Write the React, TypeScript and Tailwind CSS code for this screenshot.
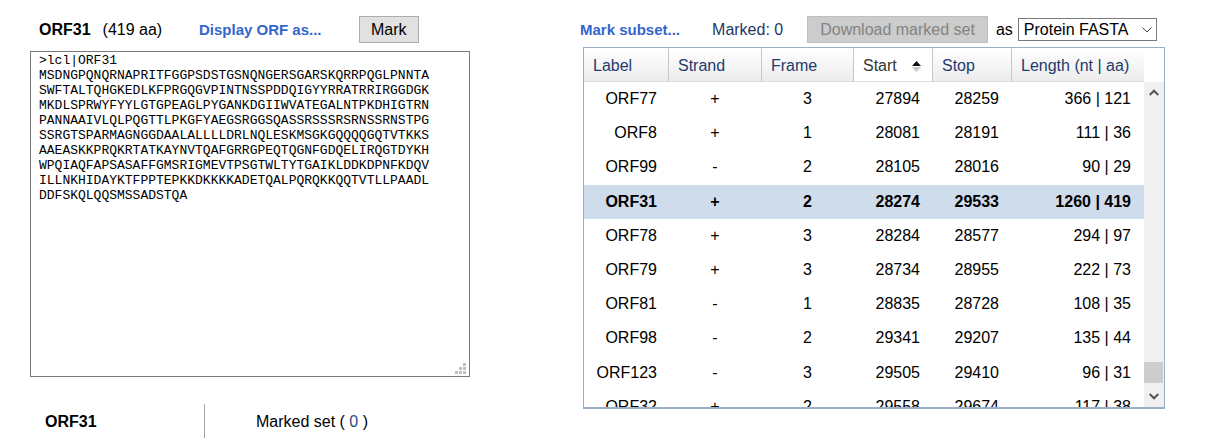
import { useState } from "react";

type Orf = {
  label: string;
  strand: "+" | "-";
  frame: number;
  start: number;
  stop: number;
  length: string;
};

const ORFS: Orf[] = [
  { label: "ORF77", strand: "+", frame: 3, start: 27894, stop: 28259, length: "366 | 121" },
  { label: "ORF8", strand: "+", frame: 1, start: 28081, stop: 28191, length: "111 | 36" },
  { label: "ORF99", strand: "-", frame: 2, start: 28105, stop: 28016, length: "90 | 29" },
  { label: "ORF31", strand: "+", frame: 2, start: 28274, stop: 29533, length: "1260 | 419" },
  { label: "ORF78", strand: "+", frame: 3, start: 28284, stop: 28577, length: "294 | 97" },
  { label: "ORF79", strand: "+", frame: 3, start: 28734, stop: 28955, length: "222 | 73" },
  { label: "ORF81", strand: "-", frame: 1, start: 28835, stop: 28728, length: "108 | 35" },
  { label: "ORF98", strand: "-", frame: 2, start: 29341, stop: 29207, length: "135 | 44" },
  { label: "ORF123", strand: "-", frame: 3, start: 29505, stop: 29410, length: "96 | 31" },
  { label: "ORF32", strand: "+", frame: 2, start: 29558, stop: 29674, length: "117 | 38" },
];

const SEQUENCE = `>lcl|ORF31
MSDNGPQNQRNAPRITFGGPSDSTGSNQNGERSGARSKQRRPQGLPNNTA
SWFTALTQHGKEDLKFPRGQGVPINTNSSPDDQIGYYRRATRRIRGGDGK
MKDLSPRWYFYYLGTGPEAGLPYGANKDGIIWVATEGALNTPKDHIGTRN
PANNAAIVLQLPQGTTLPKGFYAEGSRGGSQASSRSSSRSRNSSRNSTPG
SSRGTSPARMAGNGGDAALALLLLDRLNQLESKMSGKGQQQQGQTVTKKS
AAEASKKPRQKRTATKAYNVTQAFGRRGPEQTQGNFGDQELIRQGTDYKH
WPQIAQFAPSASAFFGMSRIGMEVTPSGTWLTYTGAIKLDDKDPNFKDQV
ILLNKHIDAYKTFPPTEPKKDKKKKADETQALPQRQKKQQTVTLLPAADL
DDFSKQLQQSMSSADSTQA`;

function ResizeGrip() {
  return (
    <svg
      className="pointer-events-none absolute right-1 bottom-[3px]"
      width="11"
      height="11"
      fill="#bfbfbf"
      shapeRendering="crispEdges"
      aria-hidden="true"
    >
      <path d="M8 0h3v3H8zM4 4h3v3H4zM8 4h3v3H8zM0 8h3v3H0zM4 8h3v3H4zM8 8h3v3H8z" />
    </svg>
  );
}

function SortIcon() {
  return (
    <svg width="9" height="11" viewBox="0 0 9 11" aria-hidden="true">
      <path d="M0 5L4.5 0L9 5z" fill="#111" />
      <path d="M0 6L4.5 11L9 6z" fill="#c8c8c8" />
    </svg>
  );
}

function SequencePanel() {
  return (
    <section>
      <div className="flex h-[51px] items-end pb-2 pl-[9px]">
        <h2 className="flex w-40 shrink-0 gap-3 leading-[27px]">
          <span className="font-bold">ORF31</span>
          <span>(419 aa)</span>
        </h2>
        <a href="#display" className="w-40 shrink-0 text-[15px] leading-[27px] font-bold text-[#3366cc]">
          Display ORF as...
        </a>
        <button type="button" className="h-[27px] border border-[#adadad] bg-[#e1e1e1] px-[11px] leading-6">
          Mark
        </button>
      </div>
      <div className="relative">
        <textarea
          aria-label="Protein sequence"
          readOnly
          spellCheck={false}
          defaultValue={SEQUENCE}
          className="block h-[326px] w-full resize-none overflow-hidden border border-[#7a7a7a] bg-white px-2 pt-px font-['Liberation_Mono',monospace] text-[13px] leading-[15px]"
        />
        <ResizeGrip />
      </div>
      <div className="mt-[27px] flex h-[34px] leading-9">
        <button type="button" className="w-[175px] border-r border-[#a6a6a6] pl-[15px] text-left font-bold">
          ORF31
        </button>
        <button type="button" className="pl-[51px] text-left">
          Marked set ( <span className="text-[#2c4a80]">0</span> )
        </button>
      </div>
    </section>
  );
}

function Toolbar() {
  return (
    <div className="flex h-[47px] items-end pb-1 leading-[27px] whitespace-nowrap">
      <a href="#subset" className="text-[15px] font-bold text-[#3366cc]">
        Mark subset...
      </a>
      <span className="ml-8 text-[#1f3864]">Marked: 0</span>
      <button
        type="button"
        disabled
        className="ml-6 h-[27px] border border-[#bfbfbf] bg-[#cccccc] px-3 leading-6 text-[#838383]"
      >
        Download marked set
      </button>
      <label htmlFor="format" className="ml-2">
        as
      </label>
      <div className="relative mb-0.5 ml-[5px] h-[23px] w-[139px]">
        <select
          id="format"
          className="block h-full w-full appearance-none border border-[#7a7a7a] bg-white pl-[5px] leading-5"
        >
          <option>Protein FASTA</option>
          <option>Nucleotide FASTA</option>
        </select>
        <svg
          className="pointer-events-none absolute top-[9px] right-[5px]"
          width="10"
          height="6"
          viewBox="0 0 10 6"
          fill="none"
          stroke="#444"
          aria-hidden="true"
        >
          <path d="M0.5 0.5L5 5L9.5 0.5" />
        </svg>
      </div>
    </div>
  );
}

const HEAD = "border-r border-b border-r-[#c6c6c6] border-b-[#d5dde6] bg-linear-to-b from-white to-[#ececec] pt-[3px] pl-[9px] text-left font-normal";

function OrfTable() {
  const [selected, setSelected] = useState("ORF31");
  return (
    <div className="ml-[3px] flex h-[362px] overflow-hidden border border-b-2 border-[#9ab0c9]">
      <div className="min-w-0 grow overflow-hidden">
        <table className="h-[376px] w-full table-fixed border-separate border-spacing-0 whitespace-nowrap">
          <colgroup>
            <col className="w-[85px]" />
            <col className="w-[93px]" />
            <col className="w-[92px]" />
            <col className="w-[79px]" />
            <col className="w-[79px]" />
            <col className="w-[132px]" />
          </colgroup>
          <thead>
            <tr className="h-[34px] text-[#1f3a6e]">
              <th className={HEAD}>Label</th>
              <th className={HEAD}>Strand</th>
              <th className={HEAD}>Frame</th>
              <th
                aria-sort="ascending"
                className="border-r border-b border-r-[#c6c6c6] border-b-[#d5dde6] pt-[3px] pr-[11px] pl-[9px] text-left font-normal text-[#333]"
              >
                <span className="flex items-center justify-between">
                  Start
                  <SortIcon />
                </span>
              </th>
              <th className={HEAD}>Stop</th>
              <th className="border-b border-[#d5dde6] bg-linear-to-b from-white to-[#ececec] pt-[3px] pl-[9px] text-left font-normal">
                Length (nt | aa)
              </th>
            </tr>
          </thead>
          <tbody>
            {ORFS.map((orf) => (
              <tr
                key={orf.label}
                onClick={() => setSelected(orf.label)}
                className={orf.label === selected ? "bg-[#cfdcec] font-bold" : ""}
              >
                <td className="pr-3 text-right">{orf.label}</td>
                <td className="pr-px text-center">{orf.strand}</td>
                <td className="pr-px text-center">{orf.frame}</td>
                <td className="pr-[13px] text-right">{orf.start}</td>
                <td className="pr-[13px] text-right">{orf.stop}</td>
                <td className="pr-[13px] text-right">{orf.length}</td>
              </tr>
            ))}
          </tbody>
        </table>
      </div>
      <div className="mt-[34px] flex w-5 shrink-0 flex-col items-center bg-[#f0f0f0]">
        <svg className="mt-[7px]" width="10" height="7" viewBox="0 0 10 7" fill="none" stroke="#555" strokeWidth="2" aria-hidden="true">
          <path d="M0.7 6L5 1.7L9.3 6" />
        </svg>
        <div className="mt-auto h-[21px] w-full border-r border-[#f0f0f0] bg-[#cdcdcd]" />
        <svg className="mt-[10px] mb-[7px]" width="10" height="7" viewBox="0 0 10 7" fill="none" stroke="#555" strokeWidth="2" aria-hidden="true">
          <path d="M0.7 1L5 5.3L9.3 1" />
        </svg>
      </div>
    </div>
  );
}

export default function App() {
  return (
    <main className="grid grid-cols-[440fr_585fr] gap-x-[110px] bg-white pr-11 pl-[30px] font-['Liberation_Sans',Arial,sans-serif] text-base text-black">
      <SequencePanel />
      <section>
        <Toolbar />
        <OrfTable />
      </section>
    </main>
  );
}
